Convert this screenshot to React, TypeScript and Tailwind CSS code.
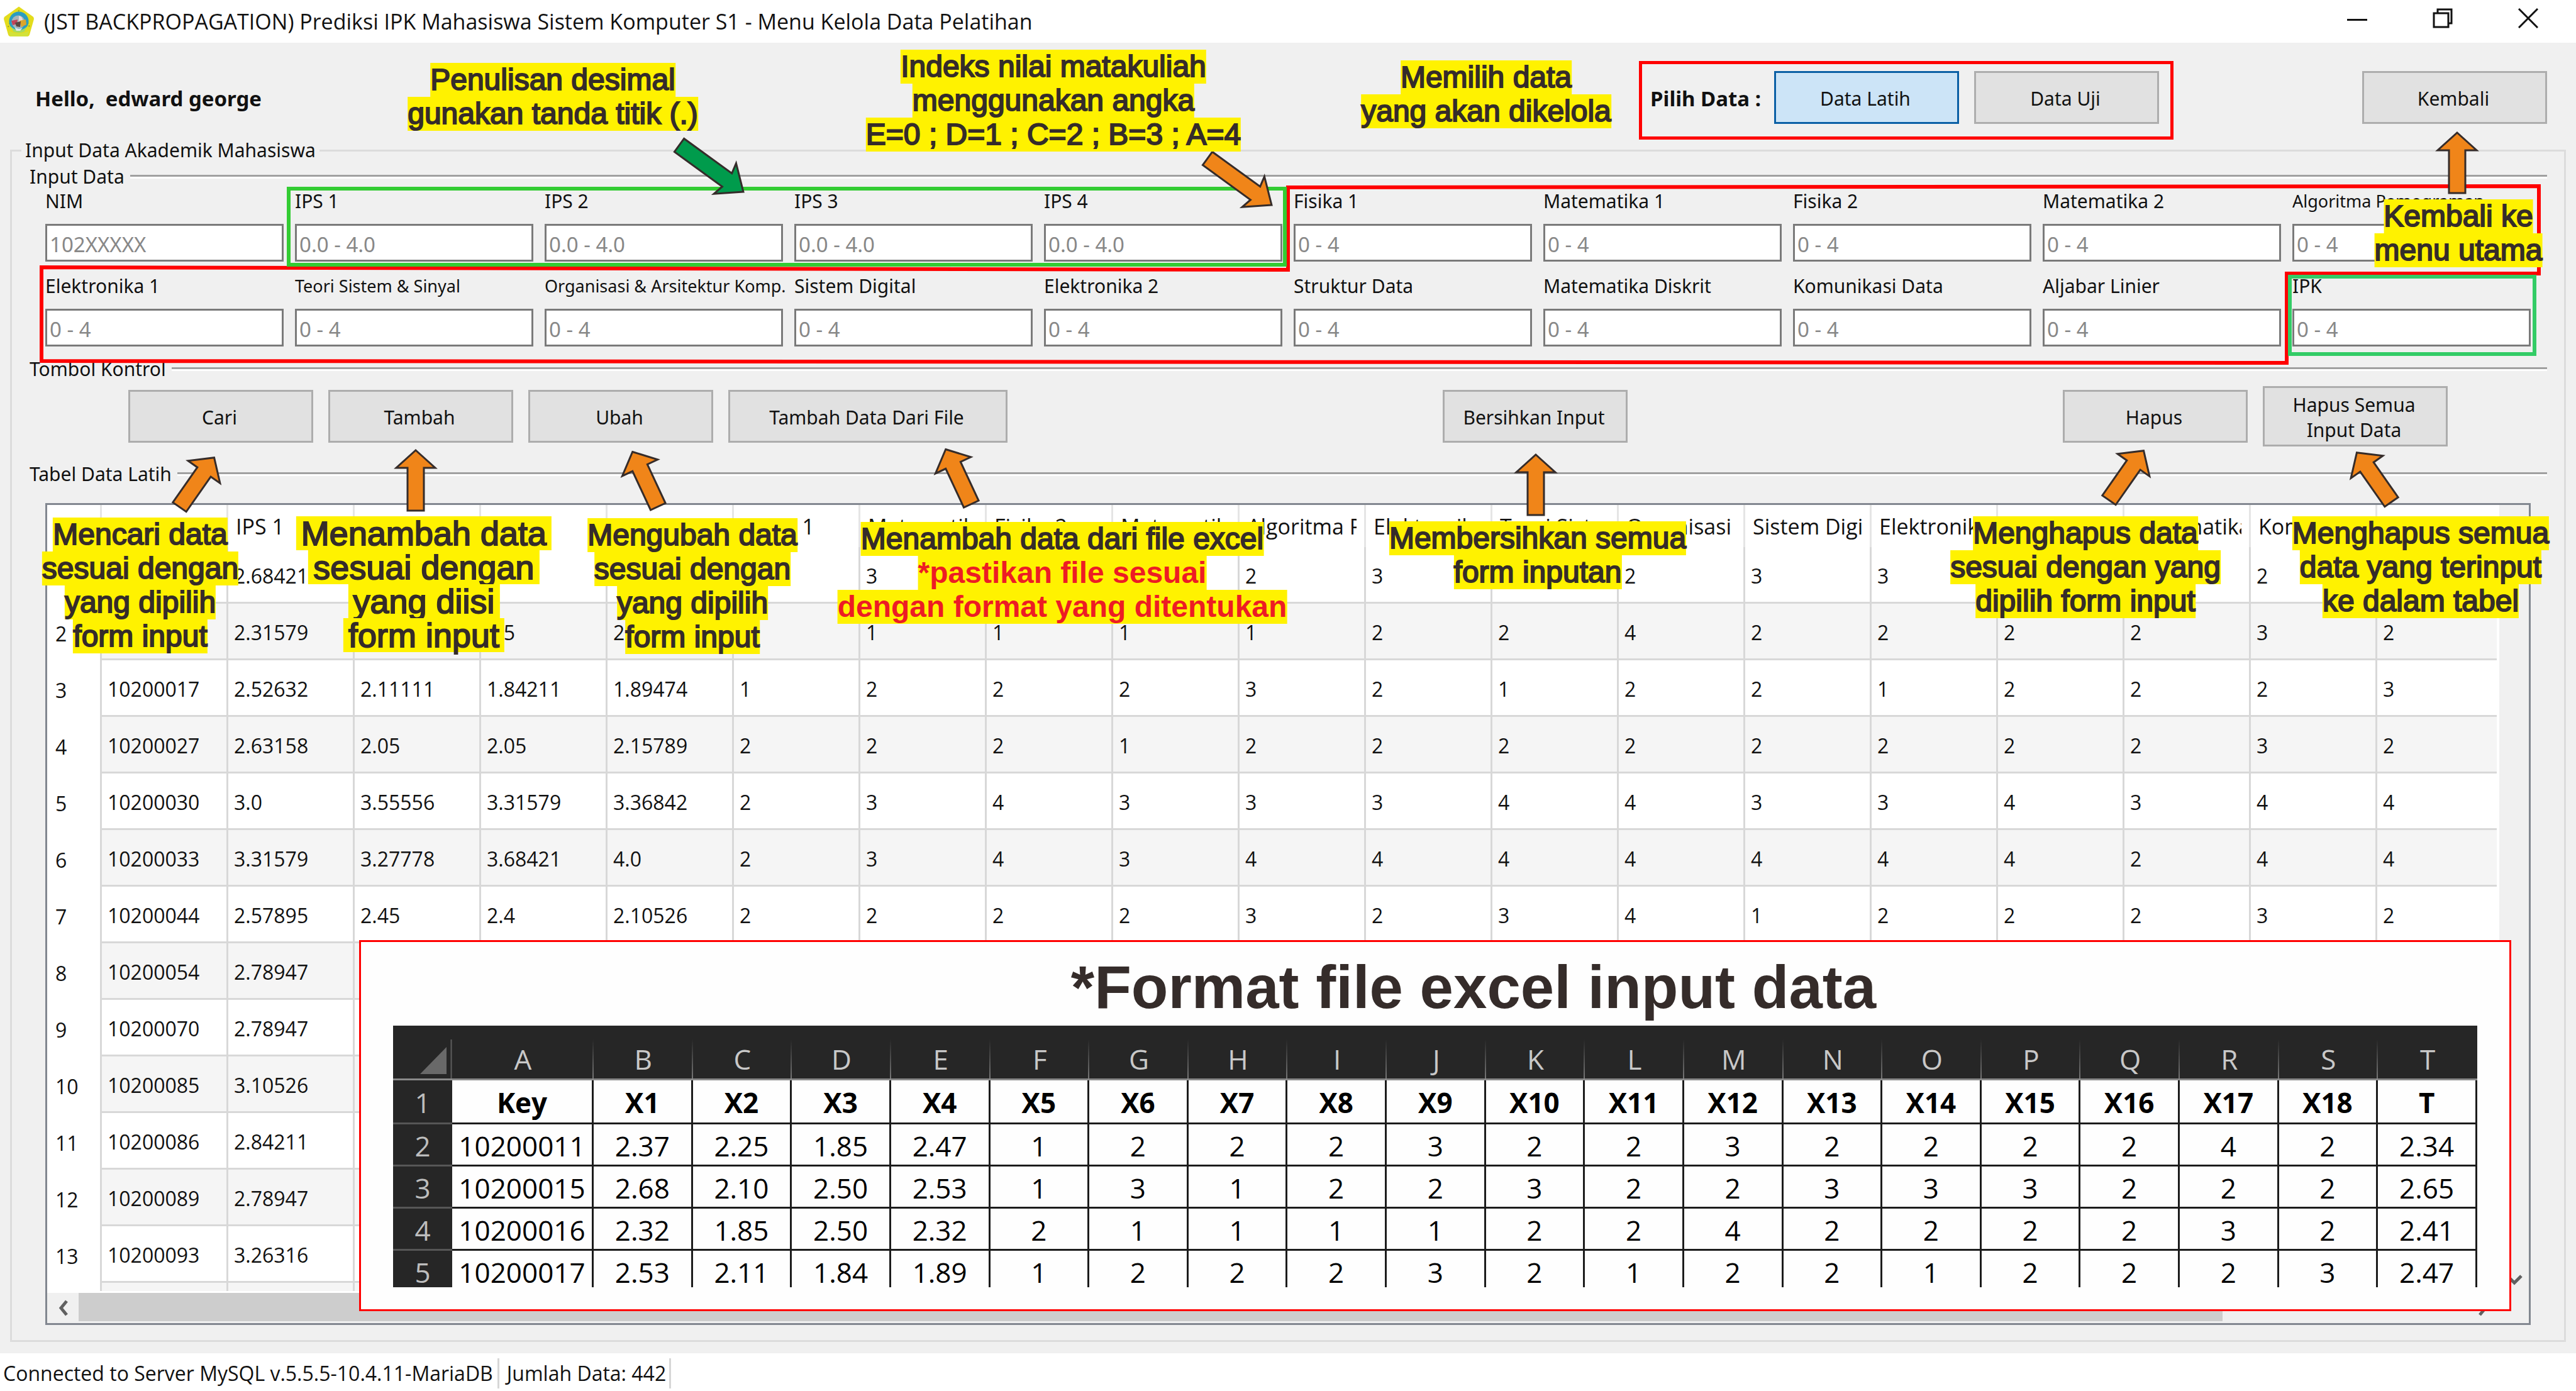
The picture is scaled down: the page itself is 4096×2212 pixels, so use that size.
import React from "react";

const fieldRows = [
  { id: "nim", label: "NIM", hint: "102XXXXX" },
  { id: "ips1", label: "IPS 1", hint: "0.0 - 4.0" },
  { id: "ips2", label: "IPS 2", hint: "0.0 - 4.0" },
  { id: "ips3", label: "IPS 3", hint: "0.0 - 4.0" },
  { id: "ips4", label: "IPS 4", hint: "0.0 - 4.0" },
  { id: "fisika1", label: "Fisika 1", hint: "0 - 4" },
  { id: "matematika1", label: "Matematika 1", hint: "0 - 4" },
  { id: "fisika2", label: "Fisika 2", hint: "0 - 4" },
  { id: "matematika2", label: "Matematika 2", hint: "0 - 4" },
  { id: "algoritma", label: "Algoritma Pemograman", hint: "0 - 4", small: true },
  { id: "elektronika1", label: "Elektronika 1", hint: "0 - 4" },
  { id: "teori", label: "Teori Sistem & Sinyal", hint: "0 - 4", small: true },
  { id: "organisasi", label: "Organisasi & Arsitektur Komp.", hint: "0 - 4", small: true },
  { id: "digital", label: "Sistem Digital", hint: "0 - 4" },
  { id: "elektronika2", label: "Elektronika 2", hint: "0 - 4" },
  { id: "struktur", label: "Struktur Data", hint: "0 - 4" },
  { id: "diskrit", label: "Matematika Diskrit", hint: "0 - 4" },
  { id: "komdat", label: "Komunikasi Data", hint: "0 - 4" },
  { id: "aljabar", label: "Aljabar Linier", hint: "0 - 4" },
  { id: "ipk", label: "IPK", hint: "0 - 4" },
];

const headers = [
  "NIM", "IPS 1", "IPS 2", "IPS 3", "IPS 4", "Fisika 1", "Matematika 1", "Fisika 2",
  "Matematika 2", "Algoritma Pemograman", "Elektronika 1", "Teori Sistem & Sinyal",
  "Organisasi & Arsitektur", "Sistem Digital", "Elektronika 2", "Struktur Data",
  "Matematika Diskrit", "Komunikasi Data", "Aljabar Linier",
];

const records = [
  "10200015 2.68421 2.10526 2.5 2.52632 1 3 1 2 2 3 2 2 3 3 3 2 2 2",
  "10200016 2.31579 1.85 2.5 2.31579 2 1 1 1 1 2 2 4 2 2 2 2 3 2",
  "10200017 2.52632 2.11111 1.84211 1.89474 1 2 2 2 3 2 1 2 2 1 2 2 2 3",
  "10200027 2.63158 2.05 2.05 2.15789 2 2 2 1 2 2 2 2 2 2 2 2 3 2",
  "10200030 3.0 3.55556 3.31579 3.36842 2 3 4 3 3 3 4 4 3 3 4 3 4 4",
  "10200033 3.31579 3.27778 3.68421 4.0 2 3 4 3 4 4 4 4 4 4 4 2 4 4",
  "10200044 2.57895 2.45 2.4 2.10526 2 2 2 2 3 2 3 4 1 2 2 2 3 2",
  "10200054 2.78947",
  "10200070 2.78947",
  "10200085 3.10526",
  "10200086 2.84211",
  "10200089 2.78947",
  "10200093 3.26316",
  "",
].map((line) => line.split(" "));

const sheetLetters = "ABCDEFGHIJKLMNOPQRST".split("");
const sheetRows = [
  "Key X1 X2 X3 X4 X5 X6 X7 X8 X9 X10 X11 X12 X13 X14 X15 X16 X17 X18 T",
  "10200011 2.37 2.25 1.85 2.47 1 2 2 2 3 2 2 3 2 2 2 2 4 2 2.34",
  "10200015 2.68 2.10 2.50 2.53 1 3 1 2 2 3 2 2 3 3 3 2 2 2 2.65",
  "10200016 2.32 1.85 2.50 2.32 2 1 1 1 1 2 2 4 2 2 2 2 3 2 2.41",
  "10200017 2.53 2.11 1.84 1.89 1 2 2 2 3 2 1 2 2 1 2 2 2 3 2.47",
].map((line) => line.split(" "));

function Logo() {
  return (
    <svg viewBox="0 0 50 50" className="size-[50px]" aria-hidden="true">
      <path d="M25 1.5 47.5 17.5Q49.5 19 48.8 22L42 46Q41 49 38 49H12Q9 49 8 46L1.2 22Q.5 19 2.5 17.5Z" fill="#e3dc1c" />
      <path d="M9 40Q25 48 41 40L39 49H11Z" fill="#d2e23a" />
      <path d="M8 34 12 24 25 8 38 24 42 34" fill="none" stroke="#9aa51c" strokeWidth="2" strokeDasharray="2 3" />
      <circle cx="25" cy="25" r="15.5" fill="#2b9cc0" />
      <path d="M12 33Q25 45 38 33L34 41Q25 45 16 41Z" fill="#a6da62" />
      <circle cx="24" cy="26" r="10.5" fill="#a8b4b8" />
      <path d="M25 16Q31 17 31 24L25 26Z" fill="#e6d9dc" />
      <path d="M13 24 23 22 22 29 15 31Z" fill="#c2435a" />
      <path d="M26 24 36 22 37 30 29 34Z" fill="#dca52c" />
      <path d="M19 27 28 25 27 34 21 33Z" fill="#5b4742" />
      <path d="M18 34Q24 39 31 35L27 40H21Z" fill="#d9e8ec" />
    </svg>
  );
}

function PushButton({ children, active, size }: { children: React.ReactNode; active?: boolean; size?: "wide" | "tall" }) {
  const tone = active ? "border-[#0a5fa5] bg-[#cce4f7]" : "border-[#adadad] bg-[#e1e1e1]";
  const box = size === "wide" ? "w-[444px] h-[84px]" : size === "tall" ? "w-[294px] h-[96px]" : "w-[294px] h-[84px]";
  return (
    <button type="button" className={`${box} ${tone} shrink-0 border-[3px] pt-[4px] pr-[4px] text-center text-[30px] leading-[40px]`}>
      {children}
    </button>
  );
}

function SectionTitle({ children }: { children: React.ReactNode }) {
  return (
    <div className="ml-[28px] mr-[27px] flex h-[42px] items-center gap-[9px]">
      <h2 className="text-[30px] leading-[42px]">{children}</h2>
      <div className="h-[6px] flex-1 border-t-[3px] border-b-[3px] border-t-[#a0a0a0] border-b-white" />
    </div>
  );
}

/* Block arrow pointing up before rotation; the origin is the middle of its length. */
function Arrow({ place, angle = 0, long, color = "#f08519" }: { place: string; angle?: number; long?: boolean; color?: string }) {
  const d = long
    ? "M0 -63 L30 -27 L13 -31 V63 H-13 V-31 L-30 -27Z"
    : "M0 -48 L31 -20 H13 V48 H-13 V-20 H-31Z";
  return (
    <svg viewBox="-70 -70 140 140" className={`absolute size-[140px] ${place}`} aria-hidden="true">
      <path d={d} transform={`rotate(${angle})`} fill={color} stroke="#352c2a" strokeWidth="3" />
    </svg>
  );
}

type Line = { text: string; red?: boolean };
function Note({ place, lines, wide }: { place: string; lines: Line[]; wide?: boolean }) {
  return (
    <div className={`absolute flex -translate-x-1/2 flex-col items-center font-['Liberation_Sans',Arial,sans-serif] leading-[54px] whitespace-nowrap ${wide ? "text-[54px]" : "text-[48px]"} ${place}`}>
      {lines.map((l) => (
        <span
          key={l.text}
          className={`bg-[#fff200] ${wide ? "px-[8px]" : ""} ${l.red ? "font-bold text-[#ed1c24]" : "text-[#352c2a] [-webkit-text-stroke:2px_#352c2a]"}`}
        >
          {l.text}
        </span>
      ))}
    </div>
  );
}

function Chevron({ d, className }: { d: string; className: string }) {
  return (
    <svg viewBox="0 0 30 30" className={`size-[30px] ${className}`} aria-hidden="true">
      <path d={d} fill="none" stroke="#606060" strokeWidth="5" />
    </svg>
  );
}

function DataTable() {
  return (
    <div className="mx-[53px] mt-[25px] mb-[24px] grid min-h-0 flex-1 grid-cols-[1fr_47px] grid-rows-[minmax(0,1fr)_48px] border-[3px] border-[#828790] bg-[#f0f0f0]">
      <div className="min-w-0 overflow-hidden border-r-[4px] border-b-[3px] border-white bg-white font-['Open_Sans',sans-serif] text-[32px]">
        <table className="w-full table-fixed border-separate border-spacing-0">
          <colgroup>
            <col className="w-[87px]" />
            {headers.slice(1).map((h) => <col key={h} className="w-[201px]" />)}
            <col />
          </colgroup>
          <thead>
            <tr className="h-[67px]">
              <th aria-label="No" className="border-r-[3px] border-[#e5e5e5]" />
              {headers.map((h) => (
                <th key={h} scope="col" className="border-r-[3px] border-[#e5e5e5] px-[12px] text-left text-[34px] leading-[60px] font-normal last:border-r-0">
                  <div className="overflow-hidden whitespace-nowrap">{h}</div>
                </th>
              ))}
            </tr>
          </thead>
          <tbody>
            {records.map((row, r) => (
              <tr key={r} className="h-[90px] even:bg-[#f5f5f5]">
                <th scope="row" className="border-r-[3px] border-[#d8d8d8] bg-white pt-[6px] pl-[13px] text-left font-normal">{r + 1}</th>
                {headers.map((h, c) => (
                  <td key={h} className="border-r-[3px] border-b-[3px] border-[#d8d8d8] pt-[4px] pl-[9px] whitespace-nowrap last:border-r-0">{row[c] ?? ""}</td>
                ))}
              </tr>
            ))}
          </tbody>
        </table>
      </div>
      <div className="flex flex-col items-center justify-between pt-[14px] pb-[6px]">
        <Chevron d="M4 21 15 10 26 21" className="" />
        <Chevron d="M4 9 15 20 26 9" className="" />
      </div>
      <div className="flex items-center">
        <Chevron d="M21 4 12 15 21 26" className="mx-[10px]" />
        <div className="h-[45px] grow-[3411] self-start bg-[#cdcdcd]" />
        <div className="grow-[400]" />
        <Chevron d="M9 4 18 15 9 26" className="mr-[10px]" />
      </div>
    </div>
  );
}

function SheetPanel() {
  return (
    <section className="absolute top-[1495px] right-[103px] left-[571px] border-[3px] border-[#ff0000] bg-[#fefefe] px-[51px] pb-[35px]">
      <h2 className="pt-[22px] pb-[11px] pl-[122px] text-center font-['Liberation_Sans',Arial,sans-serif] text-[96px] leading-[100px] font-bold text-[#352c2a]">
        *Format file excel input data
      </h2>
      <div className="h-[416px] overflow-hidden font-['Open_Sans',sans-serif] text-[44px] leading-[58px]">
        <table className="w-full table-fixed border-separate border-spacing-0 text-center text-black">
          <colgroup>
            <col className="w-[94px]" />
            <col className="w-[225px]" />
            {sheetLetters.slice(1).map((l) => <col key={l} />)}
          </colgroup>
          <thead>
            <tr className="h-[87px] bg-[#262626] text-[#c8c8c8]">
              <td className="border-b-[3px] border-[#8a8a8a] p-0">
                <svg viewBox="0 0 94 84" className="block h-[84px] w-[94px]" aria-hidden="true">
                  <path d="M85 34V77H43Z" fill="#696969" />
                  <path d="M92.5 22V84" stroke="#5c5c5c" strokeWidth="2" />
                </svg>
              </td>
              {sheetLetters.map((l) => (
                <th key={l} scope="col" className="border-b-[3px] border-[#8a8a8a] bg-[linear-gradient(to_bottom,transparent_26%,#777)] bg-[length:2px_100%] bg-right bg-no-repeat px-0 pt-[22px] font-normal last:bg-none">{l}</th>
              ))}
            </tr>
          </thead>
          <tbody>
            {sheetRows.map((row, r) => (
              <tr key={row[0]} className="h-[67px] first:h-[70px] first:font-bold">
                <th scope="row" className="border-b-[3px] border-[#565656] bg-[#262626] px-0 pt-[3px] pb-0 font-normal text-[#bdbdbd]">{r + 1}</th>
                {row.map((v, c) => (
                  <td key={c} className="border-r-[3px] border-b-[3px] border-[#1c1c1c] px-0 pt-[3px] pb-0">{v}</td>
                ))}
              </tr>
            ))}
          </tbody>
        </table>
      </div>
    </section>
  );
}

function Outlines() {
  return (
    <svg viewBox="0 0 4096 300" className="absolute top-[290px] left-0 h-[300px] w-full" preserveAspectRatio="none" fill="none" strokeWidth="6" aria-hidden="true">
      <path d="M2048 8 4037 6V145H3636V287L66 284V135L2048 139Z" stroke="#ff0000" />
      <path d="M459 10H2043V131H459Z" stroke="#33cc33" />
      <path d="M3641 150H4030V273H3641Z" stroke="#33cc66" />
    </svg>
  );
}

const t = (...texts: string[]): Line[] => texts.map((text) => ({ text }));

export default function App() {
  return (
    <div className="relative flex h-screen min-h-[2212px] w-full flex-col overflow-hidden bg-white font-['Noto_Sans',sans-serif] text-[30px] text-[#111]">
      <header className="flex h-[68px] shrink-0 items-center bg-white pl-[5px] font-['Open_Sans',sans-serif]">
        <Logo />
        <h1 className="ml-[15px] text-[34px] leading-[60px]">
          (JST BACKPROPAGATION) Prediksi IPK Mahasiswa Sistem Komputer S1 - Menu Kelola Data Pelatihan
        </h1>
        <div className="mr-[8px] mb-[10px] ml-auto flex">
          <button type="button" aria-label="Minimize" className="flex h-[58px] w-[136px] items-center justify-center">
            <svg viewBox="0 0 32 32" className="size-[32px]" stroke="#111" strokeWidth="3"><path d="M0 18.500H32" /></svg>
          </button>
          <button type="button" aria-label="Restore" className="flex h-[58px] w-[136px] items-center justify-center">
            <svg viewBox="0 0 32 32" className="size-[32px]" fill="none" stroke="#111" strokeWidth="3"><path d="M2 8H25V30H2ZM8 8V2H30V24H25" /></svg>
          </button>
          <button type="button" aria-label="Close" className="flex h-[58px] w-[136px] items-center justify-center">
            <svg viewBox="0 0 32 32" className="size-[32px]" stroke="#111" strokeWidth="3"><path d="M1 1 31 31M31 1 1 31" /></svg>
          </button>
        </div>
      </header>

      <main className="flex min-h-0 flex-1 flex-col bg-[#f0f0f0] pt-[29px] pb-[18px]">
        <div className="flex items-start">
          <p className="mt-[16px] ml-[56px] text-[33px] leading-[88px] font-bold whitespace-pre">Hello,  edward george</p>
          <div className="mr-[300px] ml-auto flex h-[125px] items-start gap-[24px] border-[5px] border-[#ff0000] pt-[11px] pr-[18px] pl-[13px]">
            <p className="-mr-[3px] text-[33px] leading-[88px] font-bold">Pilih Data :</p>
            <PushButton active>Data Latih</PushButton>
            <PushButton>Data Uji</PushButton>
          </div>
          <div className="mt-[16px] mr-[46px]"><PushButton>Kembali</PushButton></div>
        </div>

        <fieldset className="mx-[16px] -mt-[4px] flex min-h-0 flex-1 flex-col border-[3px] border-[#dcdcdc]">
          <legend className="ml-[15px] px-[6px] text-[30px] leading-[42px]">Input Data Akademik Mahasiswa</legend>

          <SectionTitle>Input Data</SectionTitle>
          <div className="mx-[53px] grid grid-cols-10 gap-x-[18px] gap-y-[21px]">
            {fieldRows.map((f) => (
              <div key={f.id} className="min-w-0">
                <label htmlFor={f.id} className={`block leading-[36px] whitespace-nowrap ${f.small ? "text-[27px]" : "text-[30px]"}`}>{f.label}</label>
                <input
                  id={f.id}
                  type="text"
                  placeholder={f.hint}
                  className="mt-[18px] block h-[60px] w-full border-[3px] border-[#7a7a7a] bg-white px-[4px] pt-[4px] text-[33px] placeholder:text-[#888]"
                />
              </div>
            ))}
          </div>

          <div className="mt-[15px]"><SectionTitle>Tombol Kontrol</SectionTitle></div>
          <div className="mt-[6px] flex items-center gap-[24px] px-[185px]">
            <PushButton>Cari</PushButton>
            <PushButton>Tambah</PushButton>
            <PushButton>Ubah</PushButton>
            <PushButton size="wide">Tambah Data Dari File</PushButton>
            <div className="flex flex-1 justify-center"><PushButton>Bersihkan Input</PushButton></div>
            <PushButton>Hapus</PushButton>
            <PushButton size="tall">Hapus Semua<br />Input Data</PushButton>
          </div>

          <div className="mt-[23px]"><SectionTitle>Tabel Data Latih</SectionTitle></div>
          <DataTable />
        </fieldset>
      </main>

      <footer className="flex h-[60px] shrink-0 items-center bg-white pt-[3px] pl-[5px] font-['Open_Sans',sans-serif] text-[32px] leading-[48px]">
        <span className="border-r-[3px] border-[#d7d7d7] pr-[7px]">Connected to Server MySQL v.5.5.5-10.4.11-MariaDB</span>
        <span className="border-r-[3px] border-[#d7d7d7] pr-[5px] pl-[12px]">Jumlah Data: 442</span>
      </footer>

      <SheetPanel />
      <Outlines />

      <Arrow place="top-[198px] left-[1061px]" angle={126} long color="#009b4c" />
      <Arrow place="top-[219px] left-[1901px]" angle={126} long />
      <Arrow place="top-[189px] left-[3837px]" />
      <Arrow place="top-[697px] left-[243px]" angle={35} />
      <Arrow place="top-[694px] left-[591px]" />
      <Arrow place="top-[692px] left-[956px]" angle={-25} />
      <Arrow place="top-[688px] left-[1454px]" angle={-25} />
      <Arrow place="top-[701px] left-[2372px]" />
      <Arrow place="top-[686px] left-[3311px]" angle={35} />
      <Arrow place="top-[689px] left-[3705px]" angle={-35} />

      <Note place="top-[100px] left-[879px]" lines={t("Penulisan desimal", "gunakan tanda titik (.)")} />
      <Note place="top-[79px] left-[1675px]" lines={t("Indeks nilai matakuliah", "menggunakan angka", "E=0 ; D=1 ; C=2 ; B=3 ; A=4")} />
      <Note place="top-[96px] left-[2363px]" lines={t("Memilih data", "yang akan dikelola")} />
      <Note place="top-[317px] left-[3909px]" lines={t("Kembali ke", "menu utama")} />
      <Note place="top-[823px] left-[223px]" lines={t("Mencari data", "sesuai dengan", "yang dipilih", "form input")} />
      <Note place="top-[821px] left-[674px]" wide lines={t("Menambah data", "sesuai dengan", "yang diisi", "form input")} />
      <Note place="top-[824px] left-[1101px]" lines={t("Mengubah data", "sesuai dengan", "yang dipilih", "form input")} />
      <Note
        place="top-[830px] left-[1689px]"
        lines={[
          { text: "Menambah data dari file excel" },
          { text: "*pastikan file sesuai", red: true },
          { text: "dengan format yang ditentukan", red: true },
        ]}
      />
      <Note place="top-[829px] left-[2445px]" lines={t("Membersihkan semua", "form inputan")} />
      <Note place="top-[821px] left-[3316px]" lines={t("Menghapus data", "sesuai dengan yang", "dipilih form input")} />
      <Note place="top-[821px] left-[3849px]" lines={t("Menghapus semua", "data yang terinput", "ke dalam tabel")} />
    </div>
  );
}
